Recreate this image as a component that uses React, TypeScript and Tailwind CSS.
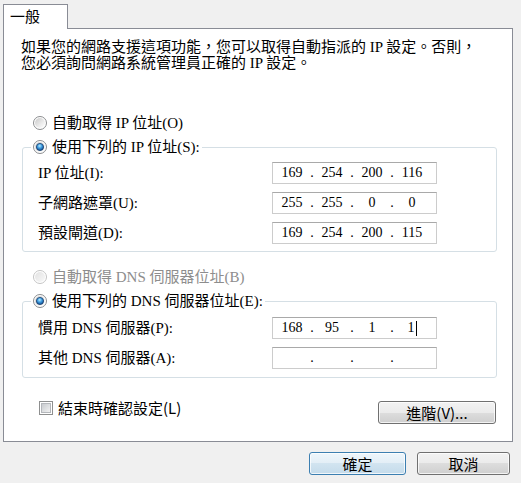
import React from "react";

const SERIF = "font-['Liberation_Serif','Noto_Sans_CJK_TC',serif]";
const SANS = "font-['Noto_Sans_CJK_TC','Liberation_Sans',sans-serif]";

function Radio({ checked, disabled }: { checked?: boolean; disabled?: boolean }) {
  return (
    <svg width="14" height="14" viewBox="0 0 14 14" className="shrink-0">
      <defs>
        <linearGradient id="rfill" x1="0" y1="0" x2="1" y2="1">
          <stop offset="0" stopColor="#c9c9c9" />
          <stop offset="0.6" stopColor="#ececec" />
          <stop offset="1" stopColor="#ffffff" />
        </linearGradient>
        <linearGradient id="rfillD" x1="0" y1="0" x2="1" y2="1">
          <stop offset="0" stopColor="#e2e2e2" />
          <stop offset="1" stopColor="#f8f8f8" />
        </linearGradient>
        <radialGradient id="rdot" cx="0.45" cy="0.35" r="0.7">
          <stop offset="0" stopColor="#b8ecff" />
          <stop offset="0.45" stopColor="#3c9be0" />
          <stop offset="1" stopColor="#0d3f80" />
        </radialGradient>
      </defs>
      <circle
        cx="7"
        cy="7"
        r="6.5"
        fill="#ffffff"
        stroke={disabled ? "#c4c4c4" : "#8a8c8e"}
        strokeWidth="1"
      />
      <circle cx="7" cy="7" r="5" fill={disabled ? "url(#rfillD)" : "url(#rfill)"} />
      {checked && (
        <circle cx="7" cy="7" r="3.6" fill="url(#rdot)" stroke="#173e6c" strokeWidth="0.8" />
      )}
    </svg>
  );
}

function Checkbox() {
  return (
    <svg width="14" height="14" viewBox="0 0 14 14" className="shrink-0">
      <defs>
        <linearGradient id="cfill" x1="0" y1="0" x2="1" y2="1">
          <stop offset="0" stopColor="#c6c9cd" />
          <stop offset="1" stopColor="#f4f4f4" />
        </linearGradient>
      </defs>
      <rect x="0.5" y="0.5" width="13" height="13" fill="#ffffff" stroke="#8e8f8f" />
      <rect x="2.5" y="2.5" width="9" height="9" fill="url(#cfill)" stroke="#b4b7bb" />
    </svg>
  );
}

function IpBox({ parts, caret }: { parts: string[]; caret?: boolean }) {
  return (
    <div
      className={`flex h-[22px] w-[165px] items-center border border-[#cccccc] border-t-[#a9a9a9] bg-white pl-[1px] text-[14px] leading-[16px] text-black ${SERIF}`}
    >
      {parts.map((p, i) => (
        <React.Fragment key={i}>
          {i > 0 && <span className="w-[4px] text-center">.</span>}
          <span className="flex w-[36px] items-center justify-center">
            {p}
            {caret && i === 3 && <span className="ml-[1px] inline-block h-[15px] w-px bg-black" />}
          </span>
        </React.Fragment>
      ))}
    </div>
  );
}

function Row({ label, parts, caret }: { label: string; parts: string[]; caret?: boolean }) {
  return (
    <div className="flex h-[22px] items-center">
      <div className="w-[234px] whitespace-nowrap">{label}</div>
      <IpBox parts={parts} caret={caret} />
    </div>
  );
}

function Btn({ children, w, def }: { children: React.ReactNode; w: string; def?: boolean }) {
  return (
    <div
      className={`flex h-[23px] ${w} items-center justify-center rounded-[3px] border ${
        def
          ? "border-[#3c7fb1] bg-[linear-gradient(to_bottom,#eef6fb_0%,#e3eef6_50%,#d2e4f0_50%,#c4dbeb_100%)]"
          : "border-[#707070] bg-[linear-gradient(to_bottom,#f2f2f2_0%,#ebebeb_50%,#dddddd_50%,#cfcfcf_100%)]"
      } text-[15px] leading-[16px] text-black shadow-[inset_0_0_0_1px_rgba(255,255,255,0.75)] ${SANS}`}
    >
      {children}
    </div>
  );
}

export default function App() {
  return (
    <div className={`h-[483px] w-[521px] overflow-hidden bg-[#f0f0f0] pl-[3px] pt-[4px] text-[15px] leading-[16px] text-black ${SERIF}`}>
      <div className="relative z-10 -mb-px h-[25px] w-[65px] border border-b-0 border-[#898c95] bg-white pl-[6px] pt-[4px]">
        一般
      </div>
      <div className="h-[414px] w-[510px] border border-[#898c95] bg-white">
        <div className="whitespace-nowrap pl-[17px] pt-[10px]">
          <div>如果您的網路支援這項功能，您可以取得自動指派的 IP 設定。否則，</div>
          <div>您必須詢問網路系統管理員正確的 IP 設定。</div>
        </div>

        <div className="ml-[18px] w-[475px]">
          <div className="mt-[44px] flex h-[16px] items-center gap-[5px] pl-[11px] whitespace-nowrap">
            <Radio />
            <span>自動取得 IP 位址(O)</span>
          </div>

          <fieldset className="mt-[8px] rounded-[3px] border border-[#d5dfe5]">
            <legend className="ml-[8px] px-[2px]">
              <div className="flex h-[16px] items-center gap-[5px] whitespace-nowrap">
                <Radio checked />
                <span>使用下列的 IP 位址(S):</span>
              </div>
            </legend>
            <div className="flex flex-col gap-[8px] pb-[7px] pl-[15px] pt-[7px]">
              <Row label="IP 位址(I):" parts={["169", "254", "200", "116"]} />
              <Row label="子網路遮罩(U):" parts={["255", "255", "0", "0"]} />
              <Row label="預設閘道(D):" parts={["169", "254", "200", "115"]} />
            </div>
          </fieldset>

          <div className="mt-[17px] flex h-[16px] items-center gap-[5px] pl-[11px] whitespace-nowrap text-[#8d8d8d]">
            <Radio disabled />
            <span>自動取得 DNS 伺服器位址(B)</span>
          </div>

          <fieldset className="mt-[8px] rounded-[3px] border border-[#d5dfe5]">
            <legend className="ml-[8px] px-[2px]">
              <div className="flex h-[16px] items-center gap-[5px] whitespace-nowrap">
                <Radio checked />
                <span>使用下列的 DNS 伺服器位址(E):</span>
              </div>
            </legend>
            <div className="flex flex-col gap-[8px] pb-[8px] pl-[15px] pt-[8px]">
              <Row label="慣用 DNS 伺服器(P):" parts={["168", "95", "1", "1"]} caret />
              <Row label="其他 DNS 伺服器(A):" parts={["", "", "", ""]} />
            </div>
          </fieldset>

          <div className="mt-[22px] flex items-start justify-between pr-[1px]">
            <div className={`flex h-[16px] items-center gap-[5px] pl-[17px] whitespace-nowrap ${SANS}`}>
              <Checkbox />
              <span>結束時確認設定(L)</span>
            </div>
            <div className="mt-[1px]">
              <Btn w="w-[118px]">進階(V)...</Btn>
            </div>
          </div>
        </div>
      </div>

      <div className="mt-[10px] flex justify-end gap-[11px] pr-[11px]">
        <Btn w="w-[97px]" def>
          確定
        </Btn>
        <Btn w="w-[93px]">取消</Btn>
      </div>
    </div>
  );
}
